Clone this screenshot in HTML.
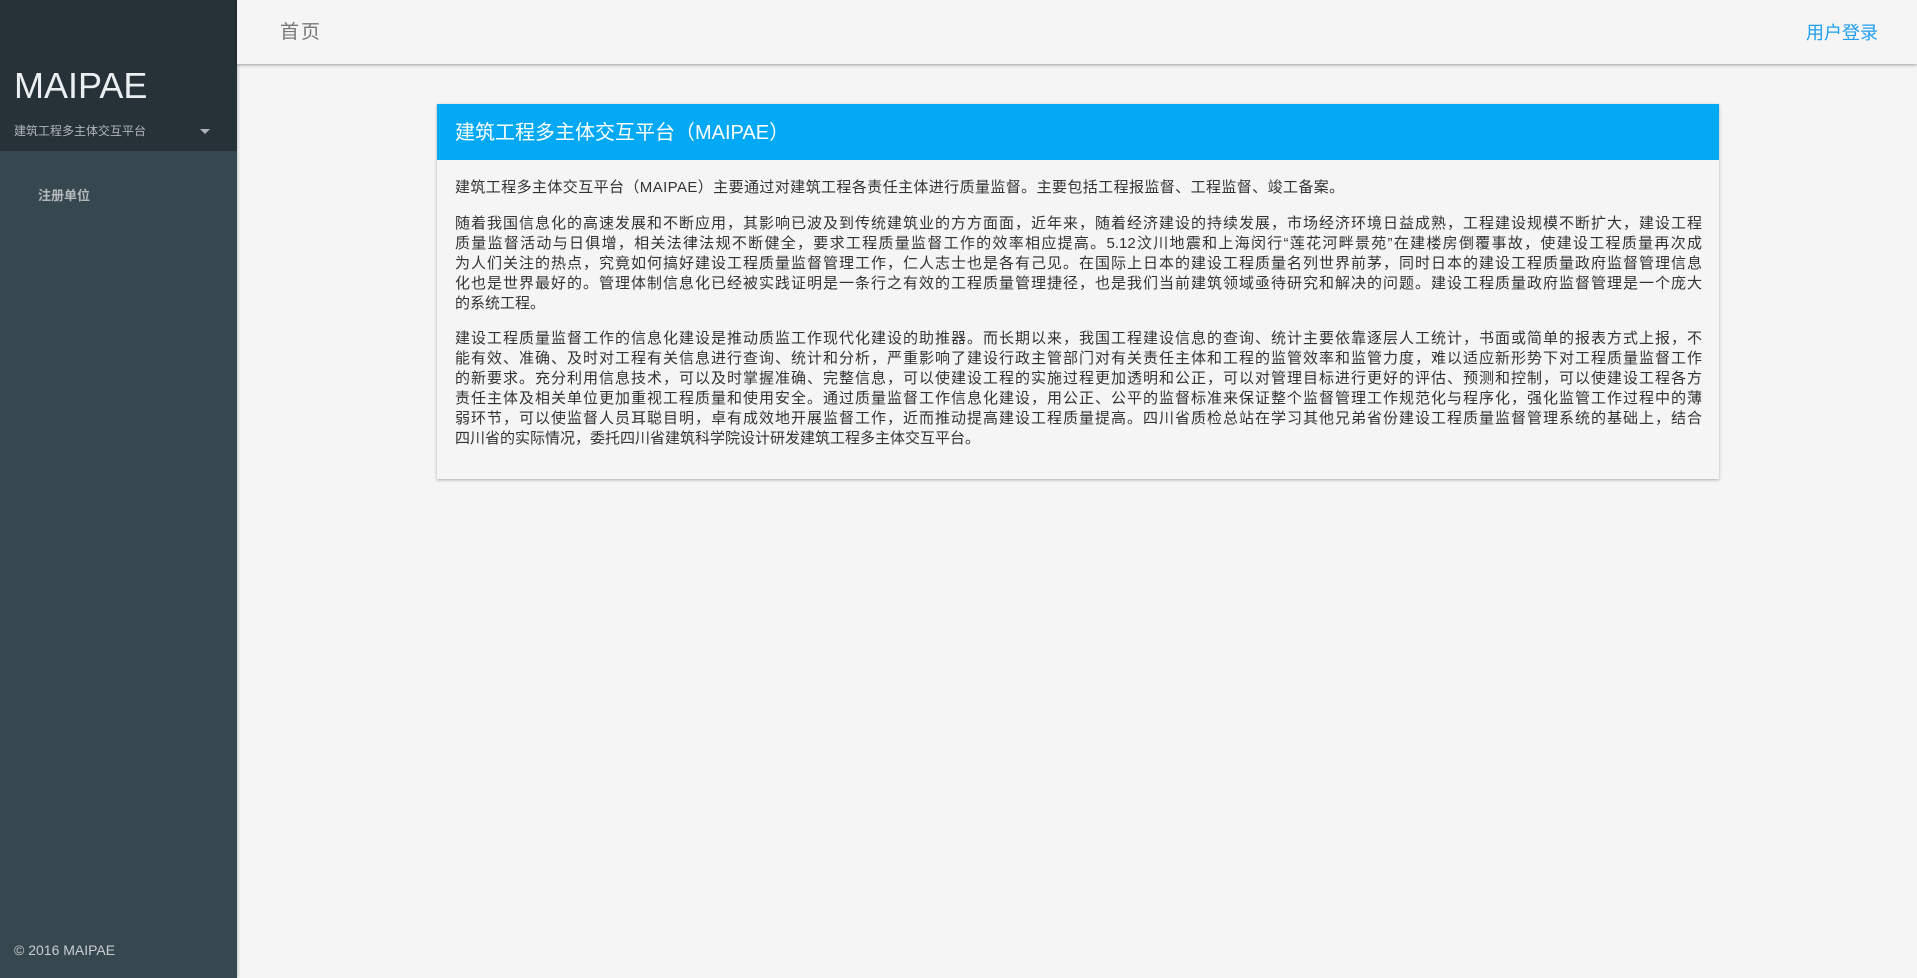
<!DOCTYPE html>
<html><head><meta charset="utf-8"><style>
*{margin:0;padding:0;box-sizing:border-box}
body{width:1917px;height:978px;background:#f5f5f5;font-family:"Liberation Sans","Noto Sans CJK SC",sans-serif;position:relative;overflow:hidden}
.sb{position:absolute;left:0;top:0;width:237px;height:978px;background:#37474f;box-shadow:1px 0 3px rgba(0,0,0,.2)}
.sbtop{height:151px;background:#263238;position:relative}
.logo{position:absolute;left:14px;top:64px;font-size:36px;color:#eceff1;line-height:44px}
.sub{position:absolute;left:14px;top:123px;font-size:12px;color:#b0b5b8;line-height:16px}
.caret{position:absolute;left:200px;top:129px;width:0;height:0;border-left:5px solid transparent;border-right:5px solid transparent;border-top:5px solid #b0b5b8}
.nav{position:absolute;left:38px;top:186px;font-size:13px;font-weight:bold;color:#b4b9bc;line-height:18px;font-family:"Noto Sans CJK SC",sans-serif}
.foot{position:absolute;left:14px;top:941px;font-size:14px;color:#c9cdd0;line-height:18px}
.hdr{position:absolute;left:237px;top:0;right:0;height:64px;background:#f5f5f5;box-shadow:0 1px 3px rgba(0,0,0,.35)}
.home{position:absolute;left:43px;top:21px;font-size:19px;color:#777;letter-spacing:2px;line-height:24px}
.login{position:absolute;right:39px;top:21px;font-size:18px;color:#1e9ff0;line-height:24px}
.card{position:absolute;left:437px;top:104px;width:1282px;height:375px;background:#f5f5f5;box-shadow:0 1px 3px rgba(0,0,0,.3)}
.ch{height:56px;background:#03a9f4;color:#fff;font-size:20px;line-height:58px;padding-left:18px}
.body{padding-left:18px;color:#333;font-size:15px;line-height:20px}
.l{width:1247px;white-space:nowrap;text-align:justify;text-align-last:justify}
.e{white-space:nowrap}
</style></head><body>
<div class="sb">
<div class="sbtop"><div class="logo">MAIPAE</div><div class="sub">建筑工程多主体交互平台</div><div class="caret"></div></div>
<div class="nav">注册单位</div>
<div class="foot">© 2016 MAIPAE</div>
</div>
<div class="hdr"><div class="home">首页</div><div class="login">用户登录</div></div>
<div class="card">
<div class="ch">建筑工程多主体交互平台（MAIPAE）</div>
<div class="body">
<div class="e" style="margin-top:18px;letter-spacing:0.4px">建筑工程多主体交互平台（MAIPAE）主要通过对建筑工程各责任主体进行质量监督。主要包括工程报监督、工程监督、竣工备案。</div>
<div style="margin-top:16px">
<div class="l">随着我国信息化的高速发展和不断应用，其影响已波及到传统建筑业的方方面面，近年来，随着经济建设的持续发展，市场经济环境日益成熟，工程建设规模不断扩大，建设工程</div>
<div class="l">质量监督活动与日俱增，相关法律法规不断健全，要求工程质量监督工作的效率相应提高。5.12汶川地震和上海闵行“莲花河畔景苑”在建楼房倒覆事故，使建设工程质量再次成</div>
<div class="l">为人们关注的热点，究竟如何搞好建设工程质量监督管理工作，仁人志士也是各有己见。在国际上日本的建设工程质量名列世界前茅，同时日本的建设工程质量政府监督管理信息</div>
<div class="l">化也是世界最好的。管理体制信息化已经被实践证明是一条行之有效的工程质量管理捷径，也是我们当前建筑领域亟待研究和解决的问题。建设工程质量政府监督管理是一个庞大</div>
<div class="e">的系统工程。</div>
</div>
<div style="margin-top:15px">
<div class="l">建设工程质量监督工作的信息化建设是推动质监工作现代化建设的助推器。而长期以来，我国工程建设信息的查询、统计主要依靠逐层人工统计，书面或简单的报表方式上报，不</div>
<div class="l">能有效、准确、及时对工程有关信息进行查询、统计和分析，严重影响了建设行政主管部门对有关责任主体和工程的监管效率和监管力度，难以适应新形势下对工程质量监督工作</div>
<div class="l">的新要求。充分利用信息技术，可以及时掌握准确、完整信息，可以使建设工程的实施过程更加透明和公正，可以对管理目标进行更好的评估、预测和控制，可以使建设工程各方</div>
<div class="l">责任主体及相关单位更加重视工程质量和使用安全。通过质量监督工作信息化建设，用公正、公平的监督标准来保证整个监督管理工作规范化与程序化，强化监管工作过程中的薄</div>
<div class="l">弱环节，可以使监督人员耳聪目明，卓有成效地开展监督工作，近而推动提高建设工程质量提高。四川省质检总站在学习其他兄弟省份建设工程质量监督管理系统的基础上，结合</div>
<div class="e">四川省的实际情况，委托四川省建筑科学院设计研发建筑工程多主体交互平台。</div>
</div>
</div>
</div>
</body></html>
